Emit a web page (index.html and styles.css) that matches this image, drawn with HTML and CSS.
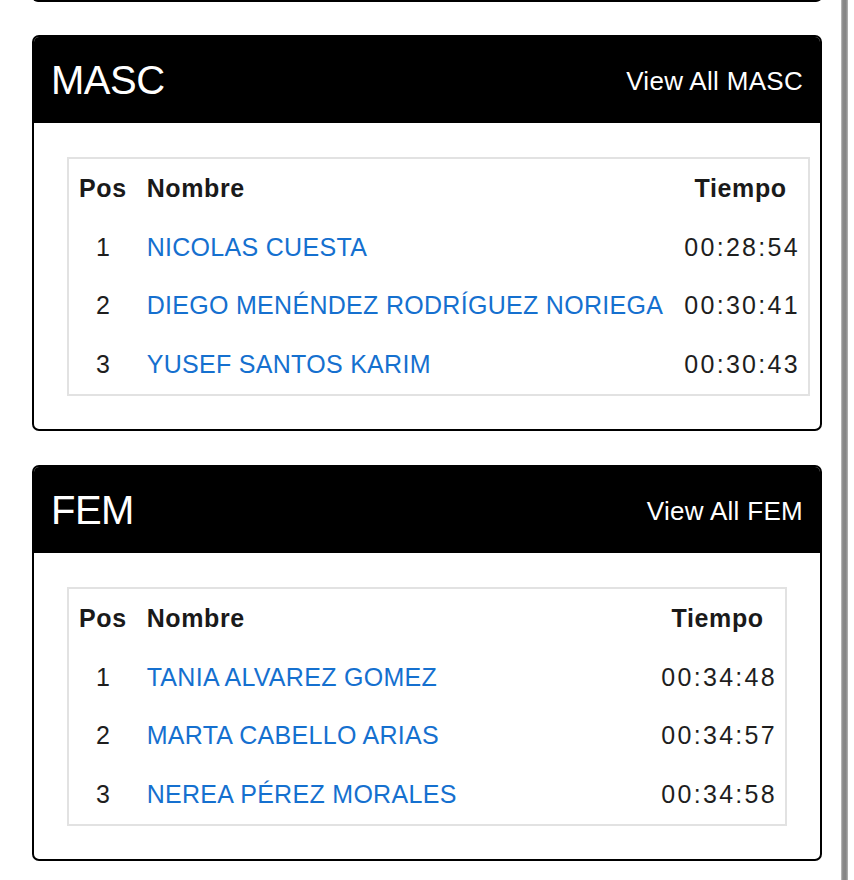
FILE: index.html
```html
<!DOCTYPE html>
<html lang="es">
<head>
<meta charset="utf-8">
<title>Resultados</title>
<link rel="stylesheet" href="styles.css">
</head>
<body>
<div class="page">
  <main class="main">
    <div class="card-tail"></div>

    <section class="card">
      <header class="card-head">
        <h2 class="card-title">MASC</h2>
        <a class="view-all" href="#">View All MASC</a>
      </header>
      <div class="card-body">
        <table class="results">
          <thead>
            <tr><th class="col-pos">Pos</th><th class="col-name">Nombre</th><th class="col-time">Tiempo</th></tr>
          </thead>
          <tbody>
            <tr><td class="col-pos">1</td><td class="col-name"><a href="#">NICOLAS CUESTA</a></td><td class="col-time">00:28:54</td></tr>
            <tr><td class="col-pos">2</td><td class="col-name"><a href="#">DIEGO MENÉNDEZ RODRÍGUEZ NORIEGA</a></td><td class="col-time">00:30:41</td></tr>
            <tr><td class="col-pos">3</td><td class="col-name"><a href="#">YUSEF SANTOS KARIM</a></td><td class="col-time">00:30:43</td></tr>
          </tbody>
        </table>
      </div>
    </section>

    <section class="card">
      <header class="card-head">
        <h2 class="card-title">FEM</h2>
        <a class="view-all" href="#">View All FEM</a>
      </header>
      <div class="card-body">
        <table class="results">
          <thead>
            <tr><th class="col-pos">Pos</th><th class="col-name">Nombre</th><th class="col-time">Tiempo</th></tr>
          </thead>
          <tbody>
            <tr><td class="col-pos">1</td><td class="col-name"><a href="#">TANIA ALVAREZ GOMEZ</a></td><td class="col-time">00:34:48</td></tr>
            <tr><td class="col-pos">2</td><td class="col-name"><a href="#">MARTA CABELLO ARIAS</a></td><td class="col-time">00:34:57</td></tr>
            <tr><td class="col-pos">3</td><td class="col-name"><a href="#">NEREA PÉREZ MORALES</a></td><td class="col-time">00:34:58</td></tr>
          </tbody>
        </table>
      </div>
    </section>
  </main>
  <div class="scroll-track"></div>
</div>
</body>
</html>
```

FILE: styles.css
```css
* { box-sizing: border-box; }

html, body {
  margin: 0;
  padding: 0;
  background: #fff;
}

body {
  font-family: "Liberation Sans", Arial, sans-serif;
  color: #1e1e1e;
  overflow: hidden;
}

.page {
  display: flex;
  align-items: stretch;
  min-height: 880px;
}

.main {
  width: 790px;
  margin-left: 32px;
  flex: 0 0 auto;
}

.scroll-track {
  width: 7px;
  margin-left: 19px;
  flex: 0 0 auto;
  background: linear-gradient(to right, #c4c4c4 0, #8a8a8a 25%, #858585 70%, #b8b8b8 100%);
}

.card-tail {
  height: 10px;
  margin-top: -8px;
  border: 2px solid #000;
  border-top: none;
  border-radius: 0 0 6px 6px;
}

.card {
  margin-top: 33px;
  border: 2px solid #000;
  border-radius: 7px;
  overflow: hidden;
}

.card + .card { margin-top: 34px; }

.card-head {
  height: 86px;
  background: #000;
  color: #fff;
  display: flex;
  align-items: center;
  justify-content: space-between;
  padding: 0 17px 0 17px;
}

.card-title {
  margin: 0;
  font-size: 40px;
  font-weight: 400;
  line-height: 1;
  letter-spacing: -0.5px;
}

.view-all {
  color: #fff;
  text-decoration: none;
  font-size: 26px;
  letter-spacing: 0.3px;
  line-height: 1;
  margin-top: 2px;
}

.card-body {
  padding: 34px 33px 33px;
}

.results {
  width: 100%;
  border-collapse: separate;
  border-spacing: 0;
  border: 2px solid #e2e2e2;
  font-size: 25px;
}

.results tr { height: 58.75px; }

.results th,
.results td {
  padding: 0 10px;
  vertical-align: middle;
  white-space: nowrap;
}

.results th {
  font-weight: 700;
  letter-spacing: 0.6px;
  color: #1a1a1a;
}

.results td { font-weight: 400; }

.col-pos { width: 1%; text-align: center; }
.col-name { text-align: left; }
.col-time { width: 1%; text-align: center; }

td.col-time {
  letter-spacing: 2.3px;
  padding: 0 8px 0 11px;
  color: #1e1e1e;
}

.col-name a {
  color: #1570cf;
  text-decoration: none;
  letter-spacing: 0.3px;
}
```
